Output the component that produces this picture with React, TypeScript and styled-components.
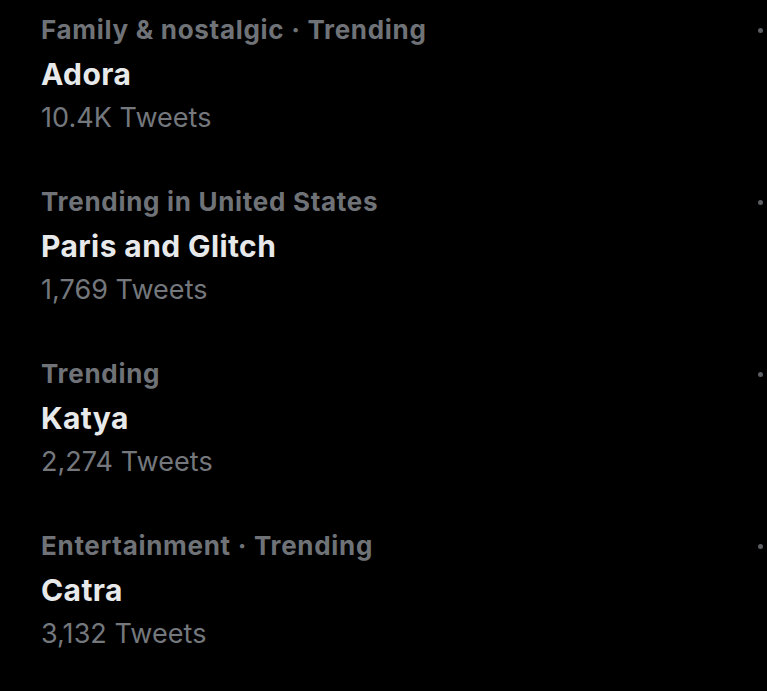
import React from "react";
import styled, { createGlobalStyle } from "styled-components";

const GlobalStyle = createGlobalStyle`
  html, body {
    margin: 0;
    padding: 0;
    background: #000;
    overflow: hidden;
  }
  body {
    font-family: Inter, "Noto Sans", "DejaVu Sans", sans-serif;
  }
`;

const List = styled.div`
  display: flex;
  flex-direction: column;
  width: 767px;
  height: 691px;
  overflow: hidden;
  background: #000;
`;

const Row = styled.div`
  display: flex;
  justify-content: space-between;
  align-items: flex-start;
  height: 172px;
  box-sizing: border-box;
  padding: 10px 0 0 41px;
`;

const Body = styled.div`
  display: flex;
  flex-direction: column;
`;

const Context = styled.div`
  font-size: 26px;
  line-height: 40px;
  font-weight: 700;
  letter-spacing: 0.7px;
  color: #6f7378;
`;

const Topic = styled.div`
  font-size: 30px;
  line-height: 48px;
  font-weight: 700;
  letter-spacing: 0.4px;
  color: #e7e9ea;
`;

const Count = styled.div`
  font-size: 27px;
  line-height: 40px;
  font-weight: 400;
  letter-spacing: 0.05px;
  color: #74787d;
`;

const More = styled.div`
  display: flex;
  gap: 5px;
  padding-top: 18px;
  margin-right: -16px;
`;

const Dot = styled.span`
  width: 5px;
  height: 5px;
  border-radius: 50%;
  background: #5b5e62;
`;

type Trend = { context: string; topic: string; count: string };

const trends: Trend[] = [
  { context: "Family & nostalgic · Trending", topic: "Adora", count: "10.4K Tweets" },
  { context: "Trending in United States", topic: "Paris and Glitch", count: "1,769 Tweets" },
  { context: "Trending", topic: "Katya", count: "2,274 Tweets" },
  { context: "Entertainment · Trending", topic: "Catra", count: "3,132 Tweets" },
];

const App = () => {
  return (
    <>
      <GlobalStyle />
      <List>
        {trends.map((t) => (
          <Row key={t.topic}>
            <Body>
              <Context>{t.context}</Context>
              <Topic>{t.topic}</Topic>
              <Count>{t.count}</Count>
            </Body>
            <More>
              <Dot />
              <Dot />
              <Dot />
            </More>
          </Row>
        ))}
      </List>
    </>
  );
};

export default App;
